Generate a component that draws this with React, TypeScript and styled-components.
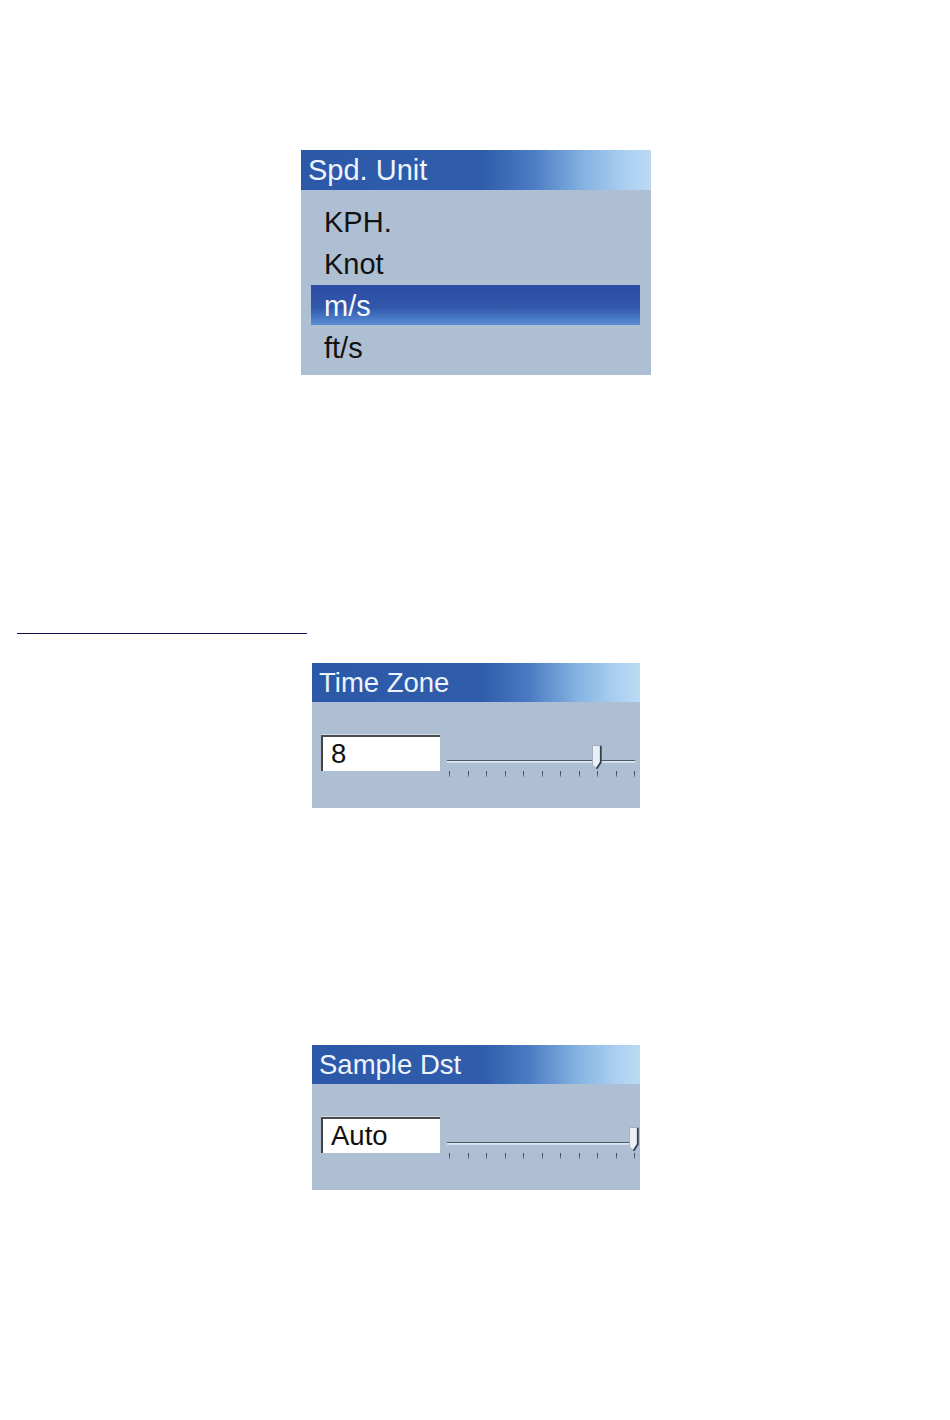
import React from "react";
import styled, { createGlobalStyle } from "styled-components";

const Global = createGlobalStyle`
  html, body { margin: 0; padding: 0; background: #ffffff; }
  body { font-family: "Liberation Sans", Arial, sans-serif; }
`;

const Page = styled.div`
  width: 950px;
  min-height: 1420px;
  background: #ffffff;
  display: flex;
  flex-direction: column;
  align-items: flex-start;
  padding-top: 150px;
  box-sizing: border-box;
`;

const Panel = styled.section<{ $x: number; $w: number; $mt?: number }>`
  margin-left: ${(p) => p.$x}px;
  margin-top: ${(p) => p.$mt ?? 0}px;
  width: ${(p) => p.$w}px;
  background: #aebfd3;
  display: flex;
  flex-direction: column;
`;

const TitleBar = styled.div<{ $h: number; $size: number; $pl: number }>`
  height: ${(p) => p.$h}px;
  line-height: ${(p) => p.$h}px;
  font-size: ${(p) => p.$size}px;
  padding-left: ${(p) => p.$pl}px;
  color: #eef4fb;
  white-space: nowrap;
  background: linear-gradient(
    to right,
    #2c58a8 0%,
    #2f5dab 52%,
    #4a7bc2 66%,
    #85b3e2 81%,
    #acd0f1 93%,
    #bcdaf3 100%
  );
`;

const List = styled.div`
  display: flex;
  flex-direction: column;
  gap: 2px;
  padding: 11px 11px 8px 10px;
`;

const Item = styled.div<{ $active?: boolean }>`
  height: 40px;
  box-sizing: border-box;
  padding: 2px 0 0 13px;
  line-height: 38px;
  font-size: 29px;
  color: ${(p) => (p.$active ? "#f4f8fc" : "#111111")};
  background: ${(p) =>
    p.$active
      ? "linear-gradient(to bottom, #2b4ea4 0%, #3156aa 55%, #4a7cc8 85%, #5a8dd2 100%)"
      : "transparent"};
`;

const Separator = styled.div`
  margin-left: 17px;
  margin-top: 258px;
  width: 290px;
  height: 1px;
  background: #1a0c52;
`;

const Body = styled.div`
  height: 106px;
  box-sizing: border-box;
  padding: 33px 5px 0 9px;
  display: flex;
  align-items: flex-start;
`;

const ValueBox = styled.div`
  width: 119px;
  height: 36px;
  box-sizing: border-box;
  background: #ffffff;
  border-top: 2px solid #4c4c4c;
  border-left: 2px solid #444444;
  box-shadow: 0 -1px 0 #cfdbe7;
  padding-left: 8px;
  font-size: 27.5px;
  line-height: 34px;
  color: #111111;
  flex: none;
`;

const SliderWrap = styled.div`
  position: relative;
  flex: 1;
  margin-left: 7px;
  height: 40px;
`;

const Track = styled.div`
  position: absolute;
  left: 0;
  right: 0;
  top: 25px;
  height: 1px;
  background: #4a596b;
  box-shadow: 0 1px 0 #dde7f1, 0 2px 0 #d2deea;
`;

const Ticks = styled.div`
  position: absolute;
  left: 2px;
  right: 0;
  top: 36px;
  display: flex;
  justify-content: space-between;
`;

const Tick = styled.span`
  width: 1px;
  height: 6px;
  background: linear-gradient(to bottom, #3f4d5e 0%, #4e5c6d 60%, #8a99aa 100%);
`;

const Thumb = styled.svg`
  position: absolute;
  top: 10px;
  width: 11px;
  height: 25px;
  overflow: visible;
`;

function Slider({ value, max }: { value: number; max: number }) {
  const ticks = Array.from({ length: 11 }, (_, i) => i);
  const span = 185;
  const center = 2 + (value / max) * span;
  return (
    <SliderWrap>
      <Track />
      <Ticks>
        {ticks.map((t) => (
          <Tick key={t} />
        ))}
      </Ticks>
      <Thumb viewBox="0 0 11 25" style={{ left: center - 5 }}>
        <path
          d="M0.5 0.5 H8.5 V17 L4.5 23.5 L0.5 20 Z"
          fill="#e9eff5"
          stroke="#a3b1c1"
          strokeWidth="1"
        />
        <path
          d="M8.8 0.8 V17.2 L4.6 23.8"
          fill="none"
          stroke="#35404e"
          strokeWidth="1.8"
        />
      </Thumb>
    </SliderWrap>
  );
}

export default function App() {
  const units = ["KPH.", "Knot", "m/s", "ft/s"];
  return (
    <>
      <Global />
      <Page>
        <Panel $x={301} $w={350}>
          <TitleBar $h={40} $size={29} $pl={7}>
            Spd. Unit
          </TitleBar>
          <List>
            {units.map((u) => (
              <Item key={u} $active={u === "m/s"}>
                {u}
              </Item>
            ))}
          </List>
        </Panel>

        <Separator />

        <Panel $x={312} $w={328} $mt={29}>
          <TitleBar $h={39} $size={27.5} $pl={7}>
            Time Zone
          </TitleBar>
          <Body>
            <ValueBox>8</ValueBox>
            <Slider value={8} max={10} />
          </Body>
        </Panel>

        <Panel $x={312} $w={328} $mt={237}>
          <TitleBar $h={39} $size={27.5} $pl={7}>
            Sample Dst
          </TitleBar>
          <Body>
            <ValueBox>Auto</ValueBox>
            <Slider value={10} max={10} />
          </Body>
        </Panel>
      </Page>
    </>
  );
}
